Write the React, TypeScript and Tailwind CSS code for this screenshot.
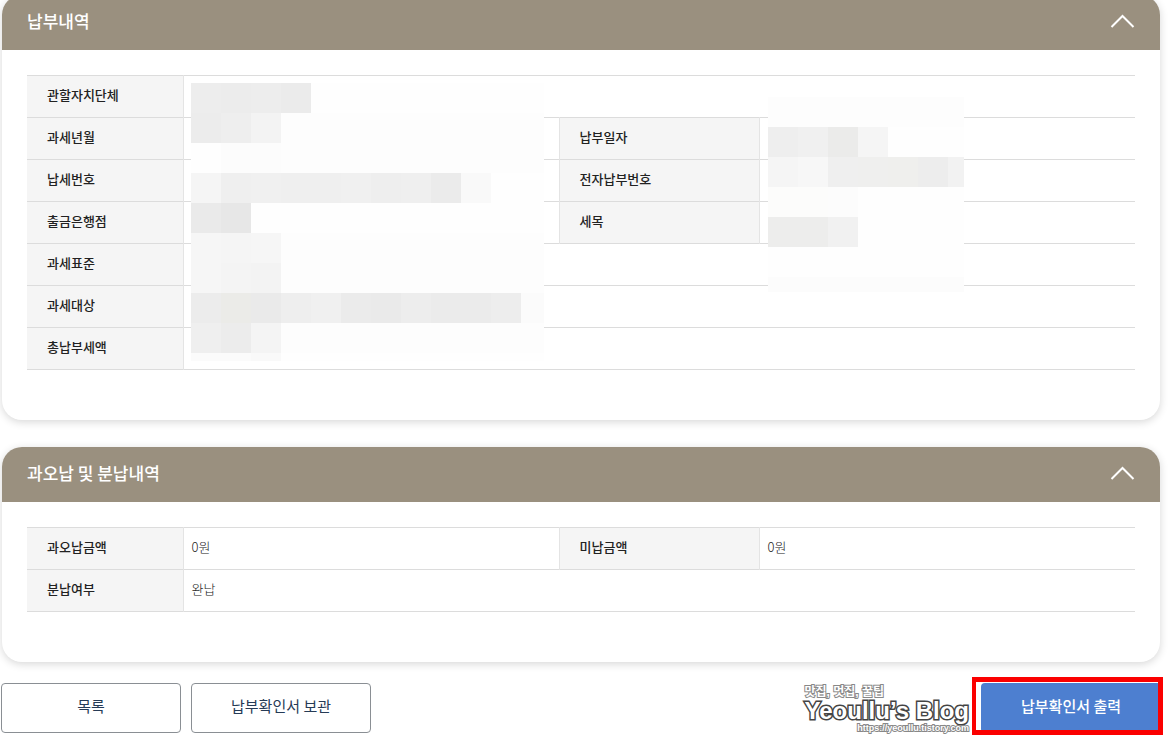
import { useState, type ReactNode } from 'react';

type MosaicRow = { h: string; rest: string; cells: string[] };

const MOSAIC_LEFT: MosaicRow[] = [
  { h: 'h-[30px]', rest: 'bg-[#fefefe]', cells: ['bg-[#ededed]', 'bg-[#ececec]', 'bg-[#ededed]', 'bg-[#ebebeb]'] },
  { h: 'h-[30px]', rest: 'bg-[#fdfdfd]', cells: ['bg-[#ececec]', 'bg-[#eeeeee]', 'bg-[#f3f3f3]'] },
  { h: 'h-[30px]', rest: 'bg-[#fdfdfd]', cells: ['bg-[#fefefe]', 'bg-[#fcfcfc]', 'bg-[#fcfcfc]'] },
  {
    h: 'h-[30px]',
    rest: 'bg-[#fefefe]',
    cells: [
      'bg-[#f5f5f5]', 'bg-[#efefef]', 'bg-[#f0f0f0]', 'bg-[#efefef]', 'bg-[#efefef]',
      'bg-[#f0f0f0]', 'bg-[#eeeeee]', 'bg-[#efefef]', 'bg-[#ebebeb]', 'bg-[#f9f9f9]',
    ],
  },
  { h: 'h-[30px]', rest: 'bg-[#fefefe]', cells: ['bg-[#eaeaea]', 'bg-[#e7e7e7]'] },
  { h: 'h-[30px]', rest: 'bg-[#fdfdfd]', cells: ['bg-[#f6f6f6]', 'bg-[#f5f5f5]', 'bg-[#f6f6f6]'] },
  { h: 'h-[30px]', rest: 'bg-[#fdfdfd]', cells: ['bg-[#f6f6f6]', 'bg-[#f4f4f4]', 'bg-[#f3f3f3]'] },
  {
    h: 'h-[30px]',
    rest: 'bg-[#fbfbfb]',
    cells: [
      'bg-[#ececec]', 'bg-[#ebebe8]', 'bg-[#eaeaea]', 'bg-[#eeeeee]', 'bg-[#f0f0f0]', 'bg-[#ebebeb]',
      'bg-[#eaeaea]', 'bg-[#ededed]', 'bg-[#ebebeb]', 'bg-[#ebebeb]', 'bg-[#ededed]',
    ],
  },
  { h: 'h-[30px]', rest: 'bg-[#fdfdfd]', cells: ['bg-[#efefef]', 'bg-[#ececec]', 'bg-[#f4f4f4]'] },
  { h: 'h-[8px]', rest: 'bg-[#fefefe]', cells: ['bg-[#fbfbfb]', 'bg-[#fbfbfb]', 'bg-[#f9f9f9]'] },
];

const MOSAIC_RIGHT: MosaicRow[] = [
  { h: 'h-[30px]', rest: 'bg-[#fdfdfd]', cells: [] },
  { h: 'h-[30px]', rest: 'bg-[#fefefe]', cells: ['bg-[#eeeeee]', 'bg-[#f0f0f0]', 'bg-[#ebebea]', 'bg-[#f5f5f5]'] },
  {
    h: 'h-[30px]',
    rest: 'bg-[#f2f2f2]',
    cells: ['bg-[#f5f5f5]', 'bg-[#f7f7f7]', 'bg-[#efefef]', 'bg-[#efefee]', 'bg-[#efefed]', 'bg-[#ededed]'],
  },
  { h: 'h-[30px]', rest: 'bg-[#fefefe]', cells: ['bg-[#fcfcfb]', 'bg-[#fcfcfb]', 'bg-[#fcfcfc]'] },
  { h: 'h-[30px]', rest: 'bg-[#fefefe]', cells: ['bg-[#ededec]', 'bg-[#ededec]', 'bg-[#f1f1f1]'] },
  { h: 'h-[30px]', rest: 'bg-[#fefefe]', cells: [] },
  { h: 'h-[15px]', rest: 'bg-[#fcfcfc]', cells: [] },
];

function Mosaic({ rows, place }: { rows: MosaicRow[]; place: string }) {
  return (
    <div aria-hidden="true" className={`absolute z-10 ${place}`}>
      {rows.map((row, i) => (
        <div key={i} className={`flex ${row.h} ${row.rest}`}>
          {row.cells.map((color, j) => (
            <span key={j} className={`w-[30px] ${color}`} />
          ))}
        </div>
      ))}
    </div>
  );
}

function Th({ children }: { children: ReactNode }) {
  return (
    <th
      scope="row"
      className="border-r border-[#e4e4e4] bg-[#f5f5f5] pb-1 pl-5 text-left text-[13px] font-medium text-[#222] not-first:border-l"
    >
      {children}
    </th>
  );
}

function Td({ children, wide }: { children?: ReactNode; wide?: boolean }) {
  return (
    <td colSpan={wide ? 3 : 1} className="relative px-2 pb-1 text-[13px] font-light text-[#222]">
      {children}
    </td>
  );
}

function InfoTable({ label, children }: { label: string; children: ReactNode }) {
  return (
    <table aria-label={label} className="w-full table-fixed border-collapse border-t border-[#dcdcdc]">
      <colgroup>
        <col className="w-[156px]" />
        <col />
        <col className="w-[200px]" />
        <col />
      </colgroup>
      <tbody>{children}</tbody>
    </table>
  );
}

const ROW = 'h-[42px] border-b border-[#dcdcdc]';

function Panel({ title, children }: { title: string; children: ReactNode }) {
  const [open, setOpen] = useState(true);
  return (
    <section className="overflow-hidden rounded-[20px] bg-white shadow-[0_2px_8px_rgba(0,0,0,0.16)]">
      <h2>
        <button
          type="button"
          aria-expanded={open}
          onClick={() => setOpen(!open)}
          className="flex h-[55px] w-full items-center justify-between bg-[#9a907f] px-[25px] pb-[3px] text-left text-[17px] font-medium text-white"
        >
          {title}
          <svg width="25" height="14" viewBox="0 0 25 14" fill="none" className={open ? '' : 'rotate-180'} aria-hidden="true">
            <path d="M1.5 13 12.5 2 23.5 13" stroke="currentColor" strokeWidth="2" />
          </svg>
        </button>
      </h2>
      {open && <div className="px-[25px] pt-[25px] pb-[50px]">{children}</div>}
    </section>
  );
}

function Watermark() {
  return (
    <div className="pointer-events-none absolute right-full bottom-0 mr-3 flex flex-col font-['Liberation_Sans','Noto_Sans_CJK_KR',sans-serif] font-bold whitespace-nowrap text-white">
      <span className="text-[12px] leading-[12px] [-webkit-text-stroke:2px_#888] [paint-order:stroke]">
        맛집, 멋집, 꿀팁
      </span>
      <span className="text-[24px] leading-[25px] [-webkit-text-stroke:3px_#444] [paint-order:stroke]">
        Yeoullu’s Blog
      </span>
      <span className="self-end text-[9px] leading-[10px] [-webkit-text-stroke:2px_#888] [paint-order:stroke]">
        https://yeoullu.tistory.com
      </span>
    </div>
  );
}

export default function App() {
  return (
    <main className="overflow-hidden bg-white pb-[13px] font-['Noto_Sans_CJK_KR','Noto_Sans',sans-serif]">
      <div className="-mt-[5px] flex flex-col gap-[27px] pr-[13px] pl-[2px]">
        <Panel title="납부내역">
          <InfoTable label="납부내역">
            <tr className={ROW}>
              <Th>관할자치단체</Th>
              <Td wide>
                <Mosaic rows={MOSAIC_LEFT} place="left-[7px] top-[7px] w-[353px]" />
              </Td>
            </tr>
            <tr className={ROW}>
              <Th>과세년월</Th>
              <Td />
              <Th>납부일자</Th>
              <Td>
                <Mosaic rows={MOSAIC_RIGHT} place="left-2 -top-[21px] w-[196px]" />
              </Td>
            </tr>
            <tr className={ROW}>
              <Th>납세번호</Th>
              <Td />
              <Th>전자납부번호</Th>
              <Td />
            </tr>
            <tr className={ROW}>
              <Th>출금은행점</Th>
              <Td />
              <Th>세목</Th>
              <Td />
            </tr>
            <tr className={ROW}>
              <Th>과세표준</Th>
              <Td wide />
            </tr>
            <tr className={ROW}>
              <Th>과세대상</Th>
              <Td wide />
            </tr>
            <tr className={ROW}>
              <Th>총납부세액</Th>
              <Td wide />
            </tr>
          </InfoTable>
        </Panel>

        <Panel title="과오납 및 분납내역">
          <InfoTable label="과오납 및 분납내역">
            <tr className={ROW}>
              <Th>과오납금액</Th>
              <Td>0원</Td>
              <Th>미납금액</Th>
              <Td>0원</Td>
            </tr>
            <tr className={ROW}>
              <Th>분납여부</Th>
              <Td wide>완납</Td>
            </tr>
          </InfoTable>
        </Panel>
      </div>

      <div className="mt-[21px] flex gap-[10px] pr-3 pl-px text-[15px]">
        <button type="button" className="h-[50px] w-[180px] rounded border border-[#8a8f94] bg-white pb-1 text-[#263b56]">
          목록
        </button>
        <button type="button" className="h-[50px] w-[180px] rounded border border-[#8a8f94] bg-white pb-1 text-[#263b56]">
          납부확인서 보관
        </button>
        <div className="relative ml-auto">
          <button type="button" className="h-[50px] w-[180px] rounded bg-[#4d7fd0] pb-1 font-medium text-white">
            납부확인서 출력
          </button>
          <div
            aria-hidden="true"
            className="pointer-events-none absolute -top-[6px] -right-[2px] -bottom-[2px] -left-[9px] border-[5px] border-l-4 border-[#fb0000]"
          />
          <Watermark />
        </div>
      </div>
    </main>
  );
}
